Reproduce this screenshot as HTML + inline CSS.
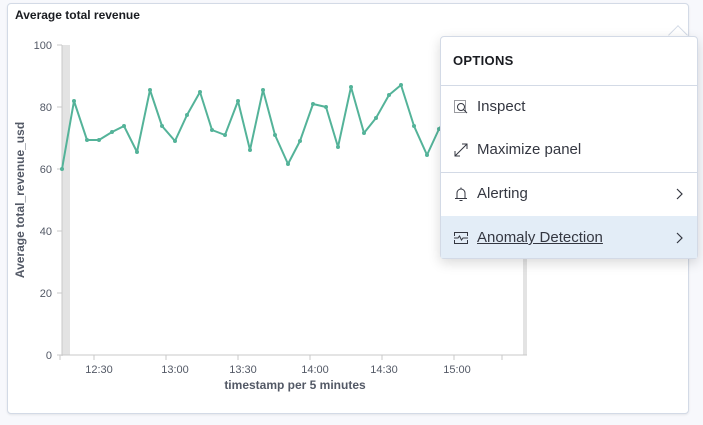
<!DOCTYPE html>
<html><head><meta charset="utf-8"><style>
body{margin:0;width:703px;height:425px;background:#f7f8fc;font-family:"Liberation Sans",sans-serif;position:relative;overflow:hidden}
.panel{position:absolute;left:7px;top:3px;width:680px;height:409px;background:#fff;border:1px solid #d3dae6;border-radius:4px;box-shadow:0 1px 2px rgba(0,0,0,.08)}
.title{position:absolute;left:15px;top:8px;font-size:12px;font-weight:bold;color:#1a1c21}
.pop{position:absolute;left:440px;top:36px;width:256px;height:221px;background:#fff;border:1px solid #d3dae6;border-radius:4px;box-shadow:0 4px 12px rgba(0,0,0,.15);color:#343741}
.arrow{position:absolute;left:671px;top:28px;width:13px;height:13px;background:#fff;border-left:1px solid #d3dae6;border-top:1px solid #d3dae6;transform:rotate(45deg)}
.row{position:absolute;left:0;width:256px;height:43px;font-size:15px;line-height:43px}
.row span{position:absolute;left:36px}
.row svg{position:absolute;left:12px;top:14px}
.row svg.chev{left:auto;right:14px;top:16px}
.hr{position:absolute;left:0;width:256px;height:1px;background:#d3dae6}
</style></head><body>
<div class="panel"></div>
<div class="title">Average total revenue</div>
<svg width="703" height="425" style="position:absolute;left:0;top:0" font-family="Liberation Sans, sans-serif">
<rect x="62" y="45" width="8" height="310" fill="#e3e3e3"/>
<rect x="523" y="45" width="4" height="310" fill="#e3e3e3"/>
<line x1="62" y1="45" x2="62" y2="356" stroke="#c8c8c8"/>
<line x1="60" y1="355" x2="527" y2="355" stroke="#c8c8c8"/>
<g stroke="#c8c8c8"><line x1="57" y1="45" x2="62" y2="45"/><line x1="57" y1="107" x2="62" y2="107"/><line x1="57" y1="169" x2="62" y2="169"/><line x1="57" y1="231" x2="62" y2="231"/><line x1="57" y1="293" x2="62" y2="293"/><line x1="57" y1="355" x2="62" y2="355"/>
<line x1="60" y1="355" x2="60" y2="360"/><line x1="94" y1="355" x2="94" y2="360"/><line x1="166" y1="355" x2="166" y2="360"/><line x1="238" y1="355" x2="238" y2="360"/><line x1="310" y1="355" x2="310" y2="360"/><line x1="382" y1="355" x2="382" y2="360"/><line x1="454" y1="355" x2="454" y2="360"/><line x1="502" y1="355" x2="502" y2="360"/></g>
<g font-size="11" fill="#535966" text-anchor="end"><text x="52" y="49">100</text><text x="52" y="111">80</text><text x="52" y="173">60</text><text x="52" y="235">40</text><text x="52" y="297">20</text><text x="52" y="359">0</text></g>
<g font-size="11" fill="#535966" text-anchor="middle"><text x="99" y="373">12:30</text><text x="175" y="373">13:00</text><text x="243" y="373">13:30</text><text x="315" y="373">14:00</text><text x="384" y="373">14:30</text><text x="457" y="373">15:00</text></g>
<text x="295" y="389" font-size="12" font-weight="bold" fill="#535966" text-anchor="middle">timestamp per 5 minutes</text>
<text transform="translate(24,200) rotate(-90)" font-size="12" font-weight="bold" fill="#535966" text-anchor="middle">Average total_revenue_usd</text>
<polyline fill="none" stroke="#54b399" stroke-width="2" stroke-linejoin="round" points="62,169 74,101 87,140 99,140 112,132 124,126 137,152 150,90 162,126 175,141 187,115 200,92 212,130 225,135 238,101 250,150 263,90 275,135 288,164 300,141 313,104 326,107 338,147 351,87 364,133 376,118 389,95 401,85 414,126 427,155 439,129 452,110"/>
<g fill="#54b399"><circle cx="62" cy="169" r="2"/><circle cx="74" cy="101" r="2"/><circle cx="87" cy="140" r="2"/><circle cx="99" cy="140" r="2"/><circle cx="112" cy="132" r="2"/><circle cx="124" cy="126" r="2"/><circle cx="137" cy="152" r="2"/><circle cx="150" cy="90" r="2"/><circle cx="162" cy="126" r="2"/><circle cx="175" cy="141" r="2"/><circle cx="187" cy="115" r="2"/><circle cx="200" cy="92" r="2"/><circle cx="212" cy="130" r="2"/><circle cx="225" cy="135" r="2"/><circle cx="238" cy="101" r="2"/><circle cx="250" cy="150" r="2"/><circle cx="263" cy="90" r="2"/><circle cx="275" cy="135" r="2"/><circle cx="288" cy="164" r="2"/><circle cx="300" cy="141" r="2"/><circle cx="313" cy="104" r="2"/><circle cx="326" cy="107" r="2"/><circle cx="338" cy="147" r="2"/><circle cx="351" cy="87" r="2"/><circle cx="364" cy="133" r="2"/><circle cx="376" cy="118" r="2"/><circle cx="389" cy="95" r="2"/><circle cx="401" cy="85" r="2"/><circle cx="414" cy="126" r="2"/><circle cx="427" cy="155" r="2"/><circle cx="439" cy="129" r="2"/></g>
</svg>
<div class="arrow"></div>
<div class="pop">
<div style="position:absolute;left:12px;top:16px;font-size:13px;font-weight:bold;color:#1a1c21;letter-spacing:.3px">OPTIONS</div>
<div class="hr" style="top:48px"></div>
<div class="row" style="top:48px"><svg width="16" height="16" viewBox="0 0 16 16" fill="none" stroke="#343741"><rect x="1.5" y="1.5" width="11" height="12" stroke-dasharray="1 1"/><circle cx="8" cy="8" r="3.5" fill="#fff"/><line x1="10.5" y1="10.5" x2="14" y2="14"/></svg><span>Inspect</span></div>
<div class="row" style="top:91px"><svg width="16" height="16" viewBox="0 0 16 16" fill="none" stroke="#343741"><path d="M2 14L14 2M9 2h5v5M2 9v5h5"/></svg><span>Maximize panel</span></div>
<div class="hr" style="top:135px"></div>
<div class="row" style="top:135px"><svg width="16" height="16" viewBox="0 0 16 16" fill="none" stroke="#343741"><path d="M4 12V7a4 4 0 018 0v5M2 12.5h12M6.5 14.5h3M8 1.5v1.5"/></svg><span>Alerting</span><svg class="chev" width="8" height="12" viewBox="0 0 8 12" fill="none" stroke="#343741" stroke-width="1.2"><path d="M2 1l5 5-5 5"/></svg></div>
<div class="row" style="top:179px;height:42px;background:#e3edf7"><svg width="16" height="16" viewBox="0 0 16 16" fill="none" stroke="#343741"><path d="M1.5 6V2.5h13V6M1.5 10v3.5h13V10M1 8h4l1.5-2 2 4 1.5-2h5"/></svg><span style="text-decoration:underline">Anomaly Detection</span><svg class="chev" width="8" height="12" viewBox="0 0 8 12" fill="none" stroke="#343741" stroke-width="1.2"><path d="M2 1l5 5-5 5"/></svg></div>
</div>
</body></html>
